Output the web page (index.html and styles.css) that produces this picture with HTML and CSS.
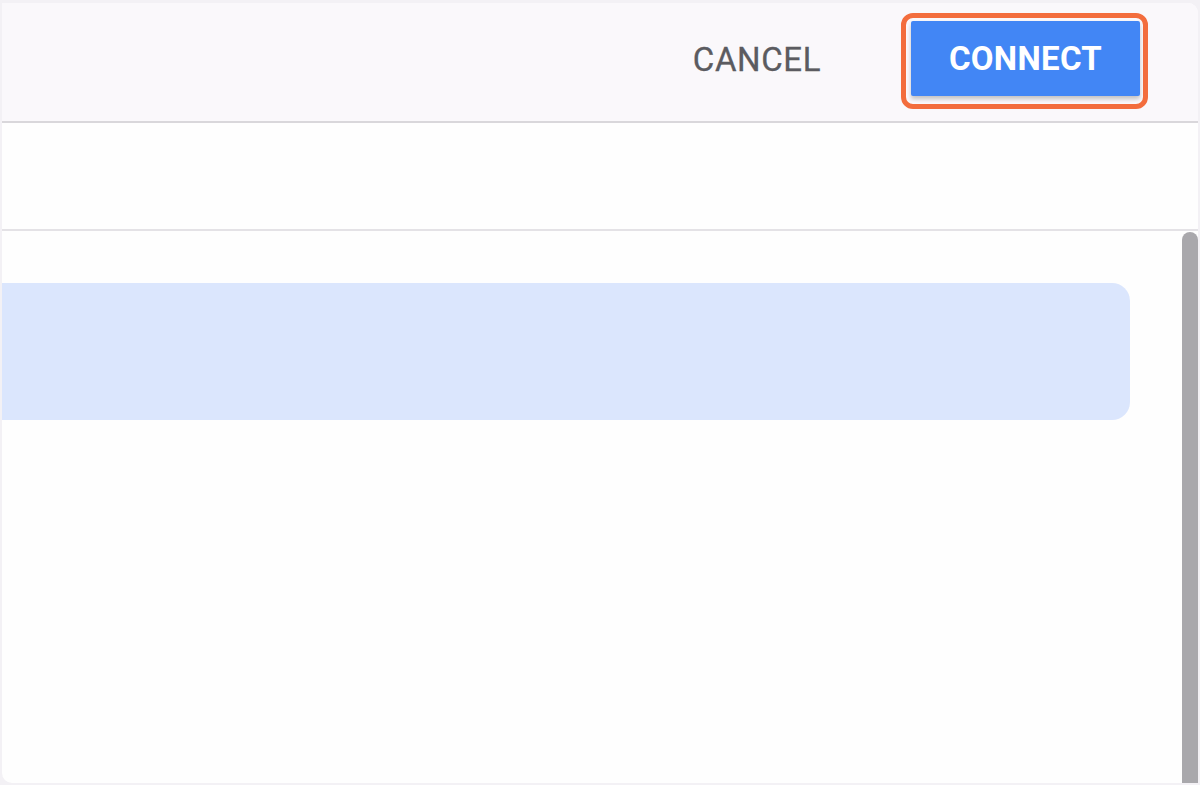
FILE: index.html
```html
<!DOCTYPE html>
<html>
<head>
<meta charset="utf-8">
<link rel="stylesheet" href="styles.css">
</head>
<body>
<div class="card">
  <header class="header">
    <button class="btn-cancel">CANCEL</button>
    <div class="highlight">
      <button class="btn-connect">CONNECT</button>
    </div>
  </header>
  <section class="subbar"></section>
  <section class="content">
    <div class="main">
      <div class="selected-row"></div>
    </div>
    <div class="scrollbar"><div class="thumb"></div></div>
  </section>
</div>
</body>
</html>
```

FILE: styles.css
```css
html, body {
  margin: 0;
  padding: 0;
  background: #f3f1f5;
  width: 1200px;
  height: 785px;
  overflow: hidden;
  font-family: Roboto, "Liberation Sans", sans-serif;
}
.card {
  margin: 3px 2px 2px 2px;
  height: 780px;
  background: #fefefe;
  border-radius: 0 10px 0 10px;
  overflow: hidden;
  display: flex;
  flex-direction: column;
}
.header {
  height: 118px;
  flex: none;
  background: #faf8fb;
  border-bottom: 2px solid #d9d7db;
  display: flex;
  align-items: center;
  justify-content: flex-end;
  padding-right: 50px;
  box-sizing: content-box;
}
.btn-cancel {
  background: none;
  border: none;
  font-family: Roboto, "Liberation Sans", sans-serif;
  font-size: 33px;
  font-weight: 400;
  letter-spacing: 0.6px;
  color: #5b5b60;
  padding: 0 0 6px 0;
  margin-right: 80px;
  -webkit-text-stroke: 0.3px #5b5b60;
}
.highlight {
  border: 5px solid #f36d3d;
  border-radius: 12px;
  padding: 3px 3px 8px 5px;
  margin-top: -2px;
}
.btn-connect {
  display: block;
  width: 229px;
  height: 75px;
  background: #4286f5;
  color: #fff;
  border: none;
  border-radius: 2px;
  font-family: Roboto, "Liberation Sans", sans-serif;
  font-size: 33px;
  font-weight: 700;
  letter-spacing: 0.3px;
  box-shadow: 0 3px 4px rgba(0,0,0,0.22);
  padding: 0 0 1px 0;
}
.subbar {
  height: 106px;
  flex: none;
  background: #fefefe;
  border-bottom: 2px solid #e4e2e6;
}
.content {
  flex: 1;
  display: flex;
  min-height: 0;
}
.main {
  flex: 1;
  padding: 52px 52px 0 0;
}
.selected-row {
  margin-left: -20px;
  height: 137px;
  background: #dbe6fd;
  border-radius: 18px;
}
.scrollbar {
  width: 16px;
  flex: none;
  padding-top: 1px;
  display: flex;
}
.thumb {
  flex: 1;
  background: #a9a8ac;
  border-radius: 8px 8px 0 0;
}
```
